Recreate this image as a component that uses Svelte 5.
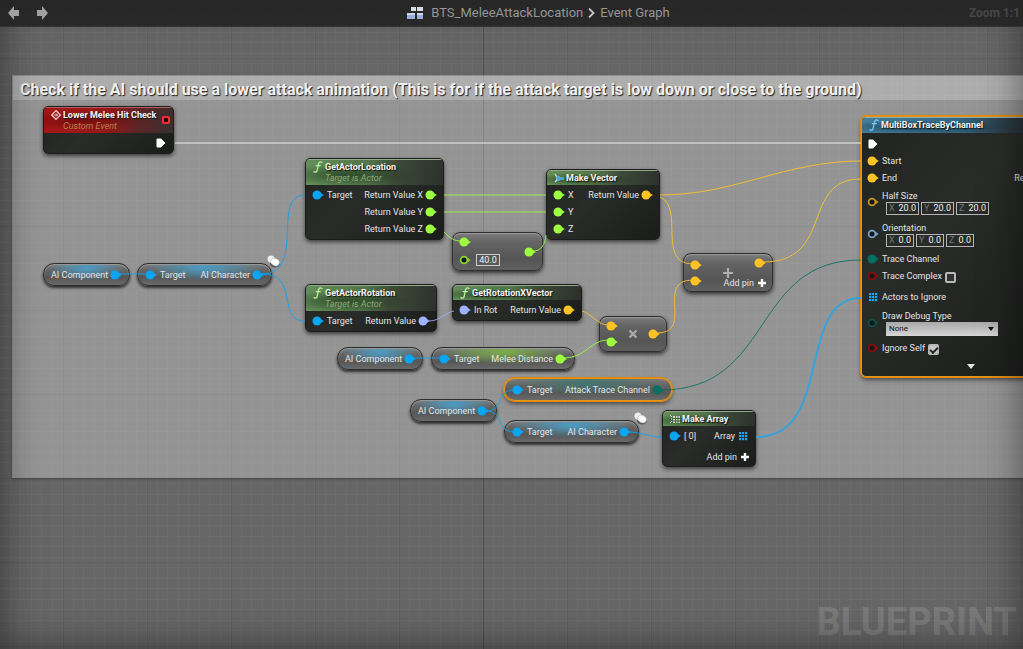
<script lang="ts">
    type PinKind = 'exec' | 'object' | 'float' | 'vector' | 'rotator' | 'enum' | 'bool' | 'array';

    interface Pin {
        kind: PinKind;
        label?: string;
        open?: boolean;
        value?: string;
    }

    interface GraphNode {
        id: string;
        shape: 'full' | 'pill' | 'compact';
        x: number;
        y: number;
        w: number;
        title?: string;
        sub?: string;
        icon?: 'event' | 'fn' | 'make' | 'array';
        symbol?: string;
        tint?: string;
        inputs: Pin[];
        outputs: Pin[];
        addPin?: boolean;
        selected?: boolean;
    }

    const colors: Record<PinKind, string> = {
        exec: '#ffffff',
        object: '#0aa5f2',
        float: '#9cff3f',
        vector: '#ffc423',
        rotator: '#9eb2ff',
        enum: '#066f63',
        bool: '#8c0d0d',
        array: '#1fa5f0'
    };

    // unconnected pins are drawn hollow and a little duller
    const openColors: Record<PinKind, string> = {
        ...colors,
        float: '#86d636',
        vector: '#c9961a',
        rotator: '#77a3c9',
        enum: '#0a5249'
    };

    const target: Pin = { kind: 'object', label: 'Target' };

    const nodes: GraphNode[] = [
        { id: 'event', shape: 'full', x: 43, y: 106, w: 131, title: 'Lower Melee Hit Check', sub: 'Custom Event', icon: 'event', tint: 'red', inputs: [], outputs: [{ kind: 'exec' }] },
        { id: 'location', shape: 'full', x: 305, y: 158, w: 139, title: 'GetActorLocation', sub: 'Target is Actor', icon: 'fn', inputs: [target], outputs: [{ kind: 'float', label: 'Return Value X' }, { kind: 'float', label: 'Return Value Y' }, { kind: 'float', label: 'Return Value Z' }] },
        { id: 'makeVector', shape: 'full', x: 546, y: 169, w: 114, title: 'Make Vector', icon: 'make', inputs: [{ kind: 'float', label: 'X' }, { kind: 'float', label: 'Y' }, { kind: 'float', label: 'Z' }], outputs: [{ kind: 'vector', label: 'Return Value' }] },
        { id: 'subtract', shape: 'compact', x: 452, y: 232, w: 91, inputs: [{ kind: 'float' }, { kind: 'float', open: true, value: '40.0' }], outputs: [{ kind: 'float' }] },
        { id: 'add', shape: 'compact', x: 683, y: 253, w: 90, symbol: 'plus', inputs: [{ kind: 'vector' }, { kind: 'vector' }], outputs: [{ kind: 'vector' }], addPin: true },
        { id: 'rotation', shape: 'full', x: 305, y: 284, w: 132, title: 'GetActorRotation', sub: 'Target is Actor', icon: 'fn', inputs: [target], outputs: [{ kind: 'rotator', label: 'Return Value' }] },
        { id: 'xVector', shape: 'full', x: 452, y: 284, w: 130, title: 'GetRotationXVector', icon: 'fn', inputs: [{ kind: 'rotator', label: 'In Rot' }], outputs: [{ kind: 'vector', label: 'Return Value' }] },
        { id: 'multiply', shape: 'compact', x: 599, y: 316, w: 68, symbol: 'times', inputs: [{ kind: 'vector' }, { kind: 'float' }], outputs: [{ kind: 'vector' }] },
        { id: 'ai1', shape: 'pill', x: 43, y: 263, w: 87, tint: 'blue', inputs: [], outputs: [{ kind: 'object', label: 'AI Component' }] },
        { id: 'character1', shape: 'pill', x: 137, y: 263, w: 135, tint: 'blue', inputs: [target], outputs: [{ kind: 'object', label: 'AI Character' }] },
        { id: 'ai2', shape: 'pill', x: 337, y: 347, w: 86, tint: 'blue', inputs: [], outputs: [{ kind: 'object', label: 'AI Component' }] },
        { id: 'distance', shape: 'pill', x: 431, y: 347, w: 144, tint: 'lime', inputs: [target], outputs: [{ kind: 'float', label: 'Melee Distance' }] },
        { id: 'ai3', shape: 'pill', x: 410, y: 399, w: 87, tint: 'blue', inputs: [], outputs: [{ kind: 'object', label: 'AI Component' }] },
        { id: 'channel', shape: 'pill', x: 504, y: 378, w: 168, tint: 'teal', inputs: [target], outputs: [{ kind: 'enum', label: 'Attack Trace Channel' }], selected: true },
        { id: 'character2', shape: 'pill', x: 504, y: 420, w: 135, tint: 'blue', inputs: [target], outputs: [{ kind: 'object', label: 'AI Character' }] },
        { id: 'makeArray', shape: 'full', x: 662, y: 410, w: 94, title: 'Make Array', icon: 'array', inputs: [{ kind: 'object', label: '[ 0]' }], outputs: [{ kind: 'array', label: 'Array' }], addPin: true }
    ];

    const wires = [
        { kind: 'exec', d: 'M175 143H861' },
        { kind: 'object', d: 'M262 274C307 274 270 195 305 195' },
        { kind: 'object', d: 'M262 274C300 274 276 321 305 321' },
        { kind: 'object', d: 'M119 274H146' },
        { kind: 'object', d: 'M412 358H440' },
        { kind: 'object', d: 'M486 411C504 411 496 390 514 390' },
        { kind: 'object', d: 'M486 411C504 411 496 432 514 432' },
        { kind: 'object', d: 'M628 432C642 432 648 437 662 437' },
        { kind: 'array', d: 'M756 437C835 437 795 298 861 298' },
        { kind: 'float', d: 'M444 195H546' },
        { kind: 'float', d: 'M444 212H546' },
        { kind: 'float', d: 'M444 232C450 238 454 241 461 241' },
        { kind: 'float', d: 'M533 251C541 251 545 245 546 235' },
        { kind: 'float', d: 'M564 358C586 358 590 340 608 340' },
        { kind: 'vector', d: 'M660 195C735 195 785 161 861 161' },
        { kind: 'vector', d: 'M660 197C685 207 656 264 693 264' },
        { kind: 'vector', d: 'M657 333C695 333 654 280 693 280' },
        { kind: 'vector', d: 'M763 262C835 262 800 179 861 179' },
        { kind: 'vector', d: 'M582 311C592 314 598 325 608 325' },
        { kind: 'rotator', d: 'M429 321C440 321 446 312 454 311' },
        { kind: 'enum', d: 'M661 390C775 390 750 260 861 260' }
    ] as { kind: PinKind; d: string }[];

    const halfSize = [['X', '20.0'], ['Y', '20.0'], ['Z', '20.0']];
    const orientation = [['X', '0.0'], ['Y', '0.0'], ['Z', '0.0']];

    let traceComplex = $state(false);
    let ignoreSelf = $state(true);
    let debugType = $state('None');
</script>

<svelte:head>
    <title>BTS_MeleeAttackLocation</title>
</svelte:head>

{#snippet pinShape(kind: PinKind, open = false)}
    <svg class="pin" viewBox="0 0 12 10" aria-hidden="true">
        {#if kind === 'exec'}
            <path d="M2 1h4l4 4-4 4H2z" fill="#fff" stroke="#fff" stroke-linejoin="round" />
        {:else if kind === 'array'}
            {#each [1, 4, 7] as row}
                {#each [2, 5, 8] as col}
                    <rect x={col} y={row} width="2.2" height="2.2" fill={colors.array} />
                {/each}
            {/each}
        {:else if open}
            <circle cx="5" cy="5" r="3.4" fill="#161616" stroke={openColors[kind]} stroke-width="1.8" />
            <path d="M9 3l2.5 2L9 7z" fill={openColors[kind]} />
        {:else}
            <circle cx="5" cy="5" r="4.5" fill={colors[kind]} />
            <path d="M8 2.5L11.8 5 8 7.5z" fill={colors[kind]} />
        {/if}
    </svg>
{/snippet}

{#snippet inputPin(pin: Pin)}
    <div class="row">
        {@render pinShape(pin.kind, pin.open)}
        {#if pin.label}<span>{pin.label}</span>{/if}
        {#if pin.value}<input class="float" type="text" aria-label="Value" value={pin.value} />{/if}
    </div>
{/snippet}

{#snippet outputPin(pin: Pin)}
    <div class="row out">
        {#if pin.label}<span>{pin.label}</span>{/if}
        {@render pinShape(pin.kind)}
    </div>
{/snippet}

{#snippet addButton()}
    <button class="add">
        Add pin
        <svg viewBox="0 0 8 8" width="8" height="8" aria-hidden="true"><path d="M4 0v8M0 4h8" stroke="#fff" stroke-width="2.4" /></svg>
    </button>
{/snippet}

{#snippet fnIcon()}
    <svg class="icon" viewBox="0 0 10 12" aria-hidden="true">
        <path d="M9 1.5C7 .3 5.8 1.2 5.4 3.4L4.3 8.8C4 10.8 2.8 11.6 1 10.6M3.2 4.6h4" fill="none" stroke="currentColor" stroke-width="1.3" stroke-linecap="round" />
    </svg>
{/snippet}

{#snippet vectorField(label: string, values: string[][])}
    <div class="field">
        {@render pinShape(label === 'Half Size' ? 'vector' : 'rotator', true)}
        <div class="stack">
            <span>{label}</span>
            <div class="axes">
                {#each values as [axis, value]}
                    <label class="axis" class:small={value === '0.0'}>{axis}<input type="text" {value} /></label>
                {/each}
            </div>
        </div>
    </div>
{/snippet}

<main class="graph">
    <svg class="grid" aria-hidden="true">
        <defs>
            <pattern id="cells" width="21" height="21" x="0" y="1" patternUnits="userSpaceOnUse">
                <path d="M10 0h1v21h-1zM0 10h21v1H0zM20 0h1v21h-1zM0 20h21v1H0z" fill="#fff" fill-opacity=".03" />
            </pattern>
            <pattern id="blocks" width="84" height="84" x="63" y="58" patternUnits="userSpaceOnUse">
                <path d="M0 0h1v84H0zM0 0h84v1H0z" fill="#000" fill-opacity=".07" />
            </pattern>
        </defs>
        <rect width="100%" height="100%" fill="url(#cells)" />
        <rect width="100%" height="100%" fill="url(#blocks)" />
        <rect x="483" width="1" height="100%" fill="#000" fill-opacity=".18" />
    </svg>

    <section class="comment">
        <h2>Check if the AI should use a lower attack animation (This is for if the attack target is low down or close to the ground)</h2>
    </section>

    {#each nodes as node (node.id)}
        <article class="node {node.shape} {node.tint ?? 'green'}" class:selected={node.selected} style="left: {node.x}px; top: {node.y}px; width: {node.w}px">
            {#if node.title}
                <header class:tall={node.sub}>
                    {#if node.icon === 'fn'}
                        {@render fnIcon()}
                    {:else if node.icon === 'event'}
                        <svg class="icon" viewBox="0 0 10 12" aria-hidden="true">
                            <path d="M5 1.5L9.5 6 5 10.5 .5 6z" fill="#8b2020" stroke="#f0d0d0" stroke-width="1.2" />
                            <path d="M2.5 6h4M5 4.5L6.5 6 5 7.5" fill="none" stroke="#f0d0d0" />
                        </svg>
                    {:else if node.icon === 'make'}
                        <svg class="icon" viewBox="0 0 10 12" aria-hidden="true">
                            <path d="M1 2l2 3v3L1 10" fill="none" stroke="#d8e4e8" stroke-width="1.2" />
                            <path d="M3 4h3v1h4v3H6v1H3z" fill="#4ba6d1" />
                        </svg>
                    {:else}
                        <svg class="icon" viewBox="0 0 10 12" aria-hidden="true">
                            <path d="M0 2l2 2M0 10l2-2M1 6h1" stroke="#e1e8df" />
                            <path d="M3 3h2v2H3zM6 3h1.5v2H6zM8.5 3H10v2H8.5zM3 6h2v1.5H3zM6 6h1.5v1.5H6zM8.5 6H10v1.5H8.5zM3 8.5h2V10H3zM6 8.5h1.5V10H6zM8.5 8.5H10V10H8.5z" fill="#ccd5ca" />
                        </svg>
                    {/if}
                    <div class="titles">
                        <h3>{node.title}</h3>
                        {#if node.sub}<p>{node.sub}</p>{/if}
                    </div>
                    {#if node.icon === 'event'}<i class="delegate"></i>{/if}
                </header>
            {/if}
            <div class="body">
                <div class="pins">
                    {#each node.inputs as pin}{@render inputPin(pin)}{/each}
                </div>
                {#if node.symbol}
                    <svg class="symbol" viewBox="0 0 10 10" aria-hidden="true">
                        <path d={node.symbol === 'plus' ? 'M5 0v10M0 5h10' : 'M1.5 1.5l7 7M8.5 1.5l-7 7'} stroke="#adadad" stroke-width="2.2" />
                    </svg>
                {/if}
                <div class="pins">
                    {#each node.outputs as pin}{@render outputPin(pin)}{/each}
                    {#if node.addPin}{@render addButton()}{/if}
                </div>
            </div>
        </article>
    {/each}

    <article class="node full trace selected blue" style="left: 861px; top: 116px; width: 190px">
        <header>
            {@render fnIcon()}
            <div class="titles"><h3>MultiBoxTraceByChannel</h3></div>
        </header>
        <div class="trace-body">
            <div class="row">{@render pinShape('exec')}</div>
            <div class="row">{@render pinShape('vector')}<span>Start</span></div>
            <div class="row">{@render pinShape('vector')}<span>End</span><span class="end">Return Value</span></div>
            {@render vectorField('Half Size', halfSize)}
            {@render vectorField('Orientation', orientation)}
            <div class="row">{@render pinShape('enum')}<span>Trace Channel</span></div>
            <div class="row check">
                {@render pinShape('bool', true)}
                <label for="complex">Trace Complex</label>
                <input id="complex" type="checkbox" bind:checked={traceComplex} />
            </div>
            <div class="row actors">{@render pinShape('array')}<span>Actors to Ignore</span></div>
            <div class="field debug">
                {@render pinShape('enum', true)}
                <div class="stack">
                    <label for="debug">Draw Debug Type</label>
                    <div class="select">
                        <select id="debug" bind:value={debugType}>
                            <option>None</option>
                            <option>For One Frame</option>
                            <option>For Duration</option>
                            <option>Persistent</option>
                        </select>
                    </div>
                </div>
            </div>
            <div class="row check">
                {@render pinShape('bool', true)}
                <label for="ignore">Ignore Self</label>
                <input id="ignore" type="checkbox" bind:checked={ignoreSelf} />
            </div>
            <button class="expand" aria-label="Show advanced pins">
                <svg viewBox="0 0 8 5" width="8" height="5" aria-hidden="true"><path d="M0 0h8L4 5z" fill="#e6e6e6" /></svg>
            </button>
        </div>
    </article>

    <svg class="wires" aria-hidden="true">
        {#each wires as wire}
            <path class={wire.kind} d={wire.d} stroke={colors[wire.kind]} />
        {/each}
        <!-- latent result bubbles -->
        {#each [[267, 255], [634, 412]] as [x, y]}
            <g transform="translate({x} {y})">
                <ellipse cx="8" cy="9" rx="5" ry="3.5" fill="#333" fill-opacity=".6" />
                <circle cx="4" cy="4" r="3.5" fill="#eee" />
                <ellipse cx="8" cy="7" rx="4.5" ry="3.5" fill="#fff" stroke="#bbb" stroke-width=".6" transform="rotate(25 8 7)" />
            </g>
        {/each}
    </svg>

    <div class="watermark">BLUEPRINT</div>
    <div class="vignette"></div>

    <header class="topbar">
        <nav class="history">
            <button aria-label="Back"><svg viewBox="0 0 12 14" width="12" height="14"><path d="M0 7l6-7v4h5v6H6v4z" fill="#a0a0a0" /></svg></button>
            <button aria-label="Forward"><svg viewBox="0 0 12 14" width="12" height="14"><path d="M12 7L6 0v4H1v6h5v4z" fill="#a0a0a0" /></svg></button>
        </nav>
        <div class="crumbs">
            <svg viewBox="0 0 17 13" width="17" height="13" aria-hidden="true">
                <path d="M4 0h5v4H4zM10 0h6v4h-6z" fill="#d5dbe2" />
                <path d="M0 6h8v6H0zM10 6h6v6h-6z" fill="#96aedb" />
                <path d="M0 6h8v2H0zM10 6h6v2h-6z" fill="#c8d6f0" />
            </svg>
            <a href="#blueprint">BTS_MeleeAttackLocation</a>
            <svg viewBox="0 0 7 10" width="7" height="10" aria-hidden="true"><path d="M1 .5L5.5 5 1 9.500" fill="none" stroke="#c8c8c8" stroke-width="1.8" /></svg>
            <a href="#graph">Event Graph</a>
        </div>
        <div class="zoom">Zoom 1:1</div>
    </header>
</main>

<style>
    :global(body) {
        background: #656565;
    }

    .graph {
        position: relative;
        height: 100vh;
        overflow: hidden;
        background: #666;
        color: #e4e4e4;
        font: 9px/12px Roboto, "Liberation Sans", sans-serif;
    }

    .grid,
    .wires,
    .vignette {
        position: absolute;
        inset: 0;
        width: 100%;
        height: 100%;
        pointer-events: none;
    }

    .vignette {
        box-shadow: inset 0 0 40px rgba(0, 0, 0, 0.5);
    }

    .topbar {
        position: absolute;
        inset: 0 0 auto;
        display: grid;
        grid-template-columns: 1fr auto 1fr;
        align-items: center;
        height: 26px;
        background: rgba(36, 36, 36, 0.92);
        border-bottom: 1px solid #333;
    }

    .history {
        display: flex;
        gap: 16px;
        padding-left: 8px;
    }

    button {
        padding: 0;
        border: 0;
        background: none;
        color: inherit;
        font: inherit;
        cursor: pointer;
    }

    svg {
        display: block;
    }

    .crumbs {
        display: flex;
        align-items: center;
        gap: 5px;
        padding-left: 54px;
        font-size: 13px;
    }

    .crumbs a {
        color: #969696;
        text-decoration: none;
    }

    .crumbs svg:first-child {
        margin-right: 2px;
    }

    .zoom {
        padding-right: 3px;
        color: #464646;
        font-size: 12px;
        font-weight: 700;
        text-align: right;
    }

    .comment {
        position: absolute;
        top: 75px;
        left: 12px;
        right: -10px;
        height: 401px;
        background: rgba(255, 255, 255, 0.3);
        border: 1px solid rgba(140, 140, 140, 0.5);
        box-shadow: 0 1px 3px rgba(0, 0, 0, 0.3);
    }

    .comment h2 {
        margin: 0;
        padding: 2px 7px 0;
        height: 22px;
        background: rgba(255, 255, 255, 0.24);
        color: #f0f0f0;
        font-size: 16px;
        line-height: 24px;
        white-space: nowrap;
        text-shadow: 1px 1px 1px #222;
    }

    .node {
        position: absolute;
        box-sizing: border-box;
        border: 1px solid #1c1c1c;
        border-radius: 5px;
        box-shadow: 0 2px 4px rgba(0, 0, 0, 0.6);
        white-space: nowrap;
    }

    .full {
        overflow: hidden;
        background: linear-gradient(135deg, #202320, #2a2c2a 40%, #1b1d1b);
    }

    .full > header {
        display: flex;
        box-sizing: border-box;
        height: 15px;
        padding: 1px 7px 0;
        gap: 2px;
        border-top: 1px solid #94a88c;
        background:
            radial-gradient(ellipse at 30% 60%, rgba(20, 40, 15, 0.6), transparent 50%),
            linear-gradient(100deg, #648f59 0%, #527449 45%, #3c4a39 65%, #2c312b);
    }

    .full > header.tall {
        height: 26px;
    }

    .red > header {
        padding-right: 3px;
        border-color: #b56060;
        background:
            radial-gradient(ellipse at 30% 50%, rgba(60, 0, 0, 0.4), transparent 55%),
            linear-gradient(100deg, #a51616 0%, #941818 50%, #5e2525 72%, #363030);
    }

    .trace > header {
        height: 16px;
        border-color: #86a8bb;
        background:
            radial-gradient(ellipse at 30% 60%, rgba(10, 40, 60, 0.6), transparent 50%),
            linear-gradient(100deg, #447e9b 0%, #336780 50%, #2c3d48 75%, #25292c);
    }

    .icon {
        flex: none;
        width: 10px;
        height: 12px;
        color: #b5ef9c;
    }

    .trace .icon {
        color: #7cc6f2;
    }

    h3,
    p {
        margin: 0;
    }

    h3 {
        color: #f2f2f2;
        font-size: 9px;
        line-height: 12px;
        text-shadow: 1px 1px 1px #111;
    }

    p {
        color: #8ba878;
        font-style: italic;
        line-height: 11px;
    }

    .red p {
        color: #b78150;
    }

    .delegate {
        width: 4px;
        height: 4px;
        margin: 7px 0 0 auto;
        border: 2px solid #ff2b2b;
        border-radius: 2px;
        background: #200;
    }

    .body {
        display: flex;
        justify-content: space-between;
        padding: 1px 6px 2px;
    }

    .row {
        display: flex;
        align-items: center;
        height: 17px;
        gap: 3px;
    }

    .out {
        justify-content: flex-end;
        gap: 2px;
    }

    .pin {
        flex: none;
        width: 12px;
        height: 10px;
    }

    .red .body {
        justify-content: flex-end;
    }

    .add {
        display: flex;
        align-items: center;
        gap: 4px;
        height: 15px;
        margin: 5px 0 0 auto;
    }

    .pill {
        border-color: #2e2e2e;
        border-radius: 11px;
        background:
            radial-gradient(ellipse 45% 60% at 50% 20%, var(--glow), transparent),
            linear-gradient(#7c7c7c 0, #646464 30%, #575757 65%, #6a6a6a);
        box-shadow: inset 0 1px 1px #9a9a9a, 0 2px 3px rgba(0, 0, 0, 0.7);
    }

    .pill .body {
        padding: 2px 7px;
    }

    .pill .pins:empty {
        display: none;
    }

    .pill.blue {
        --glow: #4a9cc4;
    }

    .pill.lime {
        --glow: #7aae48;
    }

    .pill.teal {
        --glow: #44746f;
    }

    .compact {
        border-color: #2e2e2e;
        border-radius: 8px;
        background: linear-gradient(#7c7c7c 0, #646464 25%, #555 70%, #606060);
        box-shadow: inset 0 1px 1px #9a9a9a, 0 2px 4px rgba(0, 0, 0, 0.7);
    }

    .compact .body {
        position: relative;
        align-items: center;
        padding: 1px 6px;
    }

    .compact .row {
        height: 16px;
    }

    .compact .row:has(.float) {
        height: 19px;
    }

    .compact .add {
        margin: 4px 0 0;
    }

    .symbol {
        position: absolute;
        top: 50%;
        left: 50%;
        width: 10px;
        height: 10px;
        margin: -5px;
    }

    input,
    select {
        box-sizing: border-box;
        min-width: 0;
        padding: 0;
        border: 0;
        background: none;
        color: #f0f0f0;
        font: inherit;
    }

    .float {
        width: 24px;
        height: 12px;
        margin-left: 2px;
        border: 1px solid #ccc;
        text-align: center;
    }

    .selected {
        border-color: #e69412;
        box-shadow: 0 0 0 1px #e08a0c, 0 3px 4px rgba(0, 0, 0, 0.5);
    }

    .trace-body {
        padding: 2px 5px 3px;
    }

    .end {
        margin-left: 114px;
    }

    .field {
        display: flex;
        align-items: center;
        height: 32px;
        gap: 3px;
    }

    .stack {
        display: flex;
        flex-direction: column;
    }

    .axes {
        display: flex;
        gap: 2px;
        padding-left: 4px;
    }

    .axis {
        display: flex;
        box-sizing: border-box;
        width: 33px;
        height: 13px;
        padding: 0 2px;
        border: 1px solid #b5b5b5;
        color: #777;
        line-height: 11px;
    }

    .axis.small {
        width: 28px;
    }

    .axis input {
        width: 100%;
        text-align: right;
    }

    .check input {
        appearance: none;
        display: grid;
        place-items: center;
        width: 11px;
        height: 11px;
        margin: 3px 0 0;
        border: 2px solid #b8b8b8;
        border-radius: 2px;
        background: #333;
    }

    .check input:checked {
        background: #c8c8c8;
    }

    .check input:checked::after {
        content: '';
        width: 6px;
        height: 3px;
        border: solid #222;
        border-width: 0 0 2px 2px;
        transform: rotate(-45deg);
    }

    .actors {
        height: 25px;
    }

    .debug {
        height: 28px;
        padding-bottom: 2px;
    }

    .select {
        position: relative;
        margin-left: 4px;
    }

    .select::after {
        content: '';
        position: absolute;
        top: 5px;
        right: 4px;
        border: 3px solid transparent;
        border-top: 4px solid #111;
        border-bottom: 0;
        pointer-events: none;
    }

    select {
        appearance: none;
        display: block;
        width: 112px;
        height: 14px;
        padding: 0 3px;
        background: linear-gradient(#a8a8a8, #d6d6d6);
        color: #111;
        font-size: 8px;
    }

    .expand {
        display: block;
        margin: 8px 0 4px 100px;
    }

    .wires path {
        fill: none;
        stroke-width: 1px;
        opacity: 0.85;
    }

    .wires .array {
        stroke-width: 2px;
        opacity: 0.8;
    }

    .watermark {
        position: absolute;
        right: 6px;
        bottom: 5px;
        color: rgba(255, 255, 255, 0.14);
        font-size: 38px;
        font-weight: 700;
        line-height: 44px;
    }
</style>
